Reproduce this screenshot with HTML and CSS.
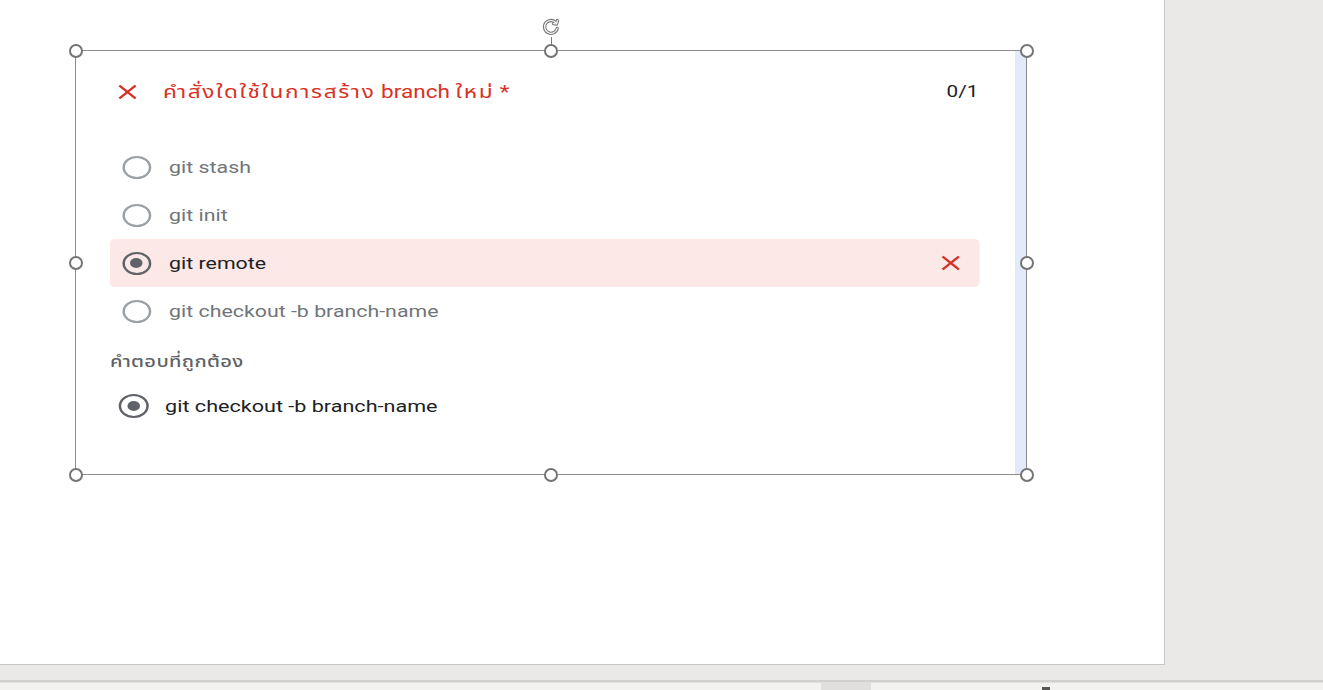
FILE: index.html
```html
<!DOCTYPE html>
<html lang="th">
<head>
<meta charset="utf-8">
<title>Quiz question</title>
<link rel="stylesheet" href="styles.css">
</head>
<body>
<div class="page">
  <div class="frame">
    <div class="card">
      <div class="q-head">
        <svg class="x-icon" viewBox="0 0 16 16"><path d="M1.5 1.5L14.5 14.5M14.5 1.5L1.5 14.5"/></svg>
        <div class="q-title"><span class="th">คำสั่งใดใช้ในการสร้าง</span> branch <span class="th">ใหม่</span> *</div>
        <div class="score">0/1</div>
      </div>
      <div class="options">
        <div class="opt"><span class="radio"></span><span class="opt-text">git stash</span></div>
        <div class="opt"><span class="radio"></span><span class="opt-text">git init</span></div>
        <div class="opt wrong"><span class="radio on"></span><span class="opt-text">git remote</span>
          <svg class="x-icon row-x" viewBox="0 0 16 16"><path d="M1.5 1.5L14.5 14.5M14.5 1.5L1.5 14.5"/></svg></div>
        <div class="opt"><span class="radio"></span><span class="opt-text">git checkout -b branch-name</span></div>
      </div>
      <div class="correct-label">คำตอบที่ถูกต้อง</div>
      <div class="opt correct"><span class="radio on"></span><span class="opt-text">git checkout -b branch-name</span></div>
    </div>
    <div class="rotate">
      <svg viewBox="0 0 20 20" class="rot-icon">
        <g class="rot-outer"><path d="M15.2 6.2A6.4 6.4 0 1 0 16.2 11.4"/><path d="M12.4 6.6L15.6 7L16.4 3.6"/></g>
        <g class="rot-inner"><path d="M15.2 6.2A6.4 6.4 0 1 0 16.2 11.4"/><path d="M12.4 6.6L15.6 7L16.4 3.6"/></g>
      </svg>
      <span class="rot-line"></span>
    </div>
    <span class="handle h-tl"></span>
    <span class="handle h-tm"></span>
    <span class="handle h-tr"></span>
    <span class="handle h-ml"></span>
    <span class="handle h-mr"></span>
    <span class="handle h-bl"></span>
    <span class="handle h-bm"></span>
    <span class="handle h-br"></span>
  </div>
</div>
<div class="statusbar">
  <span class="tab"></span>
  <span class="mark"></span>
</div>
</body>
</html>
```

FILE: styles.css
```css
* { box-sizing: border-box; }
html, body { margin: 0; padding: 0; }
body {
  background: #ebe9e7;
  width: 1323px;
  height: 690px;
  overflow: hidden;
  font-family: Roboto, "Noto Sans Thai", "Noto Sans", "DejaVu Sans", sans-serif;
}
.page {
  width: 1165px;
  height: 665px;
  background: #fff;
  border-right: 1px solid #c8c6c4;
  border-bottom: 1px solid #c8c6c4;
  padding: 50px 0 0 75px;
}
.frame {
  position: relative;
  width: 952px;
  height: 425px;
  border: 1px solid #8c8c8c;
  background: linear-gradient(to left, #e3eafa 11px, #fff 11px);
}
.card {
  width: 747px;
  height: 421px;
  background: #fff;
  border-bottom-right-radius: 6px;
  transform: scaleX(1.255);
  transform-origin: 0 0;
  padding: 29px 27px 41px 27px;
}
.q-head {
  display: flex;
  align-items: center;
  height: 24px;
  padding: 0 1px 0 6px;
}
.x-icon {
  width: 16px;
  height: 16px;
  flex: none;
  fill: none;
  stroke: #d93025;
  stroke-width: 2;
}
.q-title {
  flex: 1;
  margin-left: 20.4px;
  color: #d93025;
  font-size: 18px;
  line-height: 24px;
  white-space: nowrap;
}
.q-title .th { letter-spacing: 1.3px; }
.score {
  color: #202124;
  font-size: 16.5px;
  line-height: 24px;
}
.options {
  margin-top: 39px;
}
.opt {
  display: flex;
  align-items: center;
  height: 48px;
  padding: 0 15px 0 9.6px;
  border-radius: 4px;
}
.radio {
  position: relative;
  flex: none;
  width: 23px;
  height: 23px;
  border: 2px solid #9aa0a6;
  border-radius: 50%;
  margin-right: 14.6px;
}
.radio.on { border-color: #5f6368; }
.radio.on::after {
  content: "";
  position: absolute;
  left: 50%;
  top: 50%;
  width: 10px;
  height: 10px;
  margin: -5px 0 0 -5px;
  border-radius: 50%;
  background: #5f6368;
}
.opt-text {
  color: #70757a;
  font-size: 17px;
  line-height: 24px;
  white-space: nowrap;
}
.opt.wrong { background: #fce8e6; }
.opt.wrong .opt-text { color: #202124; }
.row-x { margin-left: auto; }
.correct-label {
  margin-top: 17px;
  color: #5f6368;
  font-size: 16px;
  font-weight: 500;
  letter-spacing: 0.3px;
  line-height: 20px;
}
.opt.correct {
  margin-top: 10px;
  padding-left: 7.2px;
}
.opt.correct .radio {
  width: 24px;
  height: 24px;
  margin-right: 12.8px;
}
.opt.correct .opt-text { color: #202124; font-size: 17.2px; }

.handle {
  position: absolute;
  width: 14px;
  height: 14px;
  border: 2px solid #747474;
  border-radius: 50%;
  background: #fff;
}
.h-tl { left: -7.5px; top: -7.5px; }
.h-tm { left: calc(50% - 7px); top: -7.5px; }
.h-tr { right: -7.5px; top: -7.5px; }
.h-ml { left: -7.5px; top: calc(50% - 7px); }
.h-mr { right: -7.5px; top: calc(50% - 7px); }
.h-bl { left: -7.5px; bottom: -7.5px; }
.h-bm { left: calc(50% - 7px); bottom: -7.5px; }
.h-br { right: -7.5px; bottom: -7.5px; }

.rotate {
  position: absolute;
  left: calc(50% - 10px);
  top: -34px;
  width: 20px;
  display: flex;
  flex-direction: column;
  align-items: center;
}
.rot-icon {
  width: 20px;
  height: 20px;
  fill: none;
  stroke-linecap: round;
  stroke-linejoin: round;
}
.rot-outer { stroke: #7a7a7a; stroke-width: 3.4; }
.rot-inner { stroke: #fff; stroke-width: 1.2; }
.rot-line {
  width: 1px;
  height: 7px;
  background: #7a7a7a;
}

.statusbar {
  position: relative;
  margin-top: 15px;
  height: 10px;
  background: #f3f2f1;
  border-top: 2px solid #d2d0ce;
  box-shadow: inset 0 1px 0 #e1dfdd;
}
.tab {
  position: absolute;
  left: 821px;
  top: 1px;
  width: 50px;
  height: 8px;
  background: #e1dfdd;
}
.mark {
  position: absolute;
  left: 1042px;
  top: 5px;
  width: 8px;
  height: 4px;
  background: #555;
}
```
